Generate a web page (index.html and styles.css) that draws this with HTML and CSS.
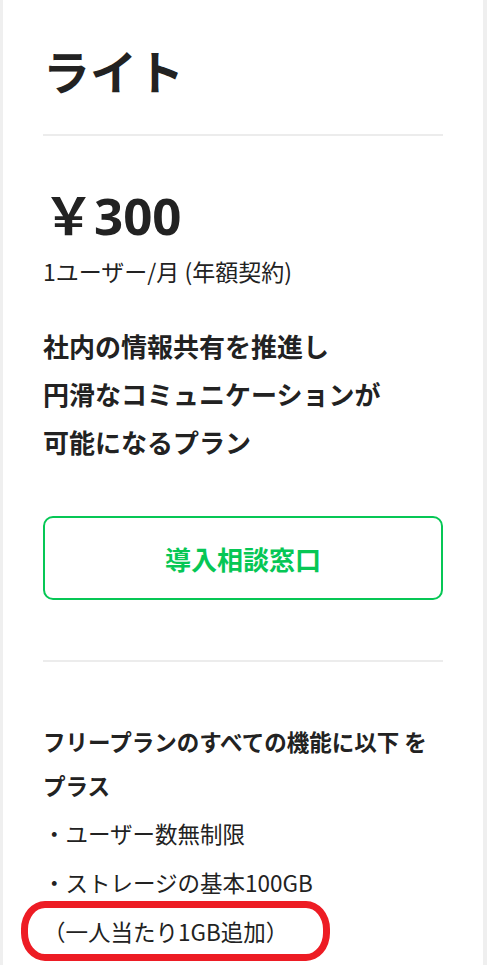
FILE: index.html
```html
<!DOCTYPE html>
<html lang="ja">
<head>
<meta charset="utf-8">
<title>ライト</title>
<link rel="stylesheet" href="styles.css">
</head>
<body>
<div class="card">
  <h1 class="plan-name">ライト</h1>
  <hr class="rule">
  <div class="price"><span class="yen">￥</span>300</div>
  <p class="unit">1ユーザー/月 (年額契約)</p>
  <p class="lead">社内の情報共有を推進し<br>円滑なコミュニケーションが<br>可能になるプラン</p>
  <a class="cta" href="#">導入相談窓口</a>
  <hr class="rule rule-lower">
  <p class="features-title">フリープランのすべての機能に以下 を<br>プラス</p>
  <ul class="features">
    <li>・ユーザー数無制限</li>
    <li>・ストレージの基本100GB</li>
    <li class="note">（一人当たり1GB追加）<span class="annot"></span></li>
  </ul>
</div>
</body>
</html>
```

FILE: styles.css
```css
html, body {
  margin: 0;
  padding: 0;
}
body {
  background: #efefef;
  height: 965px;
  overflow: hidden;
  font-family: "Noto Sans CJK JP", "Noto Sans", sans-serif;
  color: #222222;
}
.card {
  margin-left: 3px;
  width: 400px;
  min-height: 965px;
  background: #ffffff;
  padding: 40px 40px 0 40px;
}
.plan-name {
  margin: 0;
  font-size: 47px;
  line-height: 60px;
  font-weight: 700;
}
.rule {
  border: 0;
  height: 2px;
  background: #ececec;
  margin: 34px 0 0 0;
}
.price {
  margin-top: 47px;
  font-size: 51px;
  line-height: 60px;
  font-weight: 700;
  font-family: "Noto Sans", "Noto Sans CJK JP", sans-serif;
}
.yen {
  font-family: "Noto Sans CJK JP", sans-serif;
}
.unit {
  margin: 11px 0 0 0;
  font-size: 23px;
  line-height: 30px;
}
.lead {
  margin: 36px 0 0 0;
  font-size: 26px;
  line-height: 48px;
  font-weight: 700;
}
.cta {
  display: flex;
  align-items: center;
  justify-content: center;
  margin-top: 50px;
  height: 80px;
  border: 2px solid #06c755;
  border-radius: 10px;
  color: #06c755;
  font-size: 26px;
  font-weight: 700;
  text-decoration: none;
}
.rule-lower {
  margin-top: 60px;
}
.features-title {
  margin: 57px 0 0 0;
  font-size: 22.5px;
  line-height: 44px;
  font-weight: 700;
  white-space: nowrap;
}
.features {
  list-style: none;
  margin: 2px 0 0 0;
  padding: 0;
  font-size: 22.5px;
  line-height: 49px;
}
.note {
  position: relative;
}
.annot {
  position: absolute;
  left: -22px;
  top: -6px;
  width: 295px;
  height: 46px;
  border: 7px solid #ed1c24;
  border-radius: 24px / 28px;
}
```
